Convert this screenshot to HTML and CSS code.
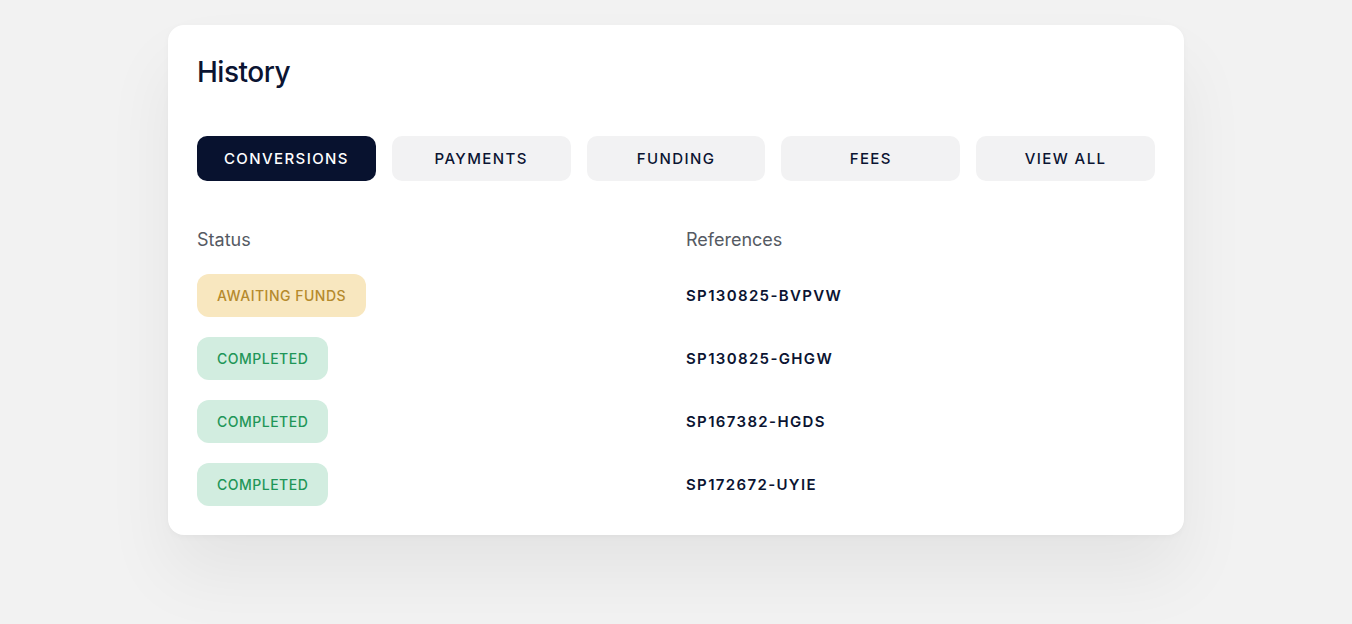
FILE: index.html
```html
<!DOCTYPE html>
<html>
<head>
<meta charset="utf-8">
<link rel="stylesheet" href="styles.css">
</head>
<body>
<div class="page">
  <section class="card">
    <h1 class="title">History</h1>
    <nav class="tabs">
      <button class="tab active">CONVERSIONS</button>
      <button class="tab">PAYMENTS</button>
      <button class="tab">FUNDING</button>
      <button class="tab">FEES</button>
      <button class="tab">VIEW ALL</button>
    </nav>
    <div class="table">
      <div class="head">Status</div>
      <div class="head">References</div>
      <div class="cell"><span class="badge awaiting">AWAITING FUNDS</span></div>
      <div class="cell ref">SP130825-BVPVW</div>
      <div class="cell"><span class="badge done">COMPLETED</span></div>
      <div class="cell ref">SP130825-GHGW</div>
      <div class="cell"><span class="badge done">COMPLETED</span></div>
      <div class="cell ref">SP167382-HGDS</div>
      <div class="cell"><span class="badge done">COMPLETED</span></div>
      <div class="cell ref">SP172672-UYIE</div>
    </div>
  </section>
</div>
</body>
</html>
```
FILE: styles.css
```css
* { box-sizing: border-box; }
html, body { margin: 0; padding: 0; }
body {
  background: #f2f2f2;
  font-family: Inter, "Noto Sans", sans-serif;
  color: #0b1432;
  height: 624px;
  overflow: hidden;
}
.page {
  display: flex;
  justify-content: center;
  padding-top: 25px;
}
.card {
  width: 1016px;
  background: #fff;
  border-radius: 16px;
  padding: 29px 29px 29px 29px;
  box-shadow: 0 40px 70px rgba(0, 0, 0, 0.06), 0 2px 6px rgba(0,0,0,0.03);
}
.title {
  margin: 0;
  font-size: 28px;
  font-weight: 500;
  letter-spacing: -0.5px;
  line-height: 36px;
}
.tabs {
  display: flex;
  gap: 16px;
  margin-top: 46px;
}
.tab {
  flex: 1;
  height: 45px;
  border: none;
  border-radius: 10px;
  background: #f2f2f3;
  font-family: inherit;
  font-size: 15px;
  font-weight: 500;
  letter-spacing: 1.4px;
  color: #0b1432;
  padding: 0;
}
.tab.active {
  background: #08122f;
  color: #fff;
}
.table {
  display: grid;
  grid-template-columns: 1fr 1fr;
  column-gap: 20px;
  row-gap: 20px;
  margin-top: 46px;
}
.head {
  font-size: 18px;
  color: #555a63;
  line-height: 26px;
  margin-bottom: 1px;
}
.cell {
  height: 43px;
  display: flex;
  align-items: center;
}
.badge {
  display: inline-flex;
  align-items: center;
  height: 43px;
  padding: 0 20px;
  border-radius: 12px;
  font-size: 14px;
  font-weight: 500;
  letter-spacing: 0.5px;
}
.awaiting { background: #f8e7bf; color: #b58a2c; }
.done { background: #d2ede0; color: #1f9658; }
.ref {
  font-size: 15px;
  font-weight: 600;
  letter-spacing: 1.35px;
}
```
